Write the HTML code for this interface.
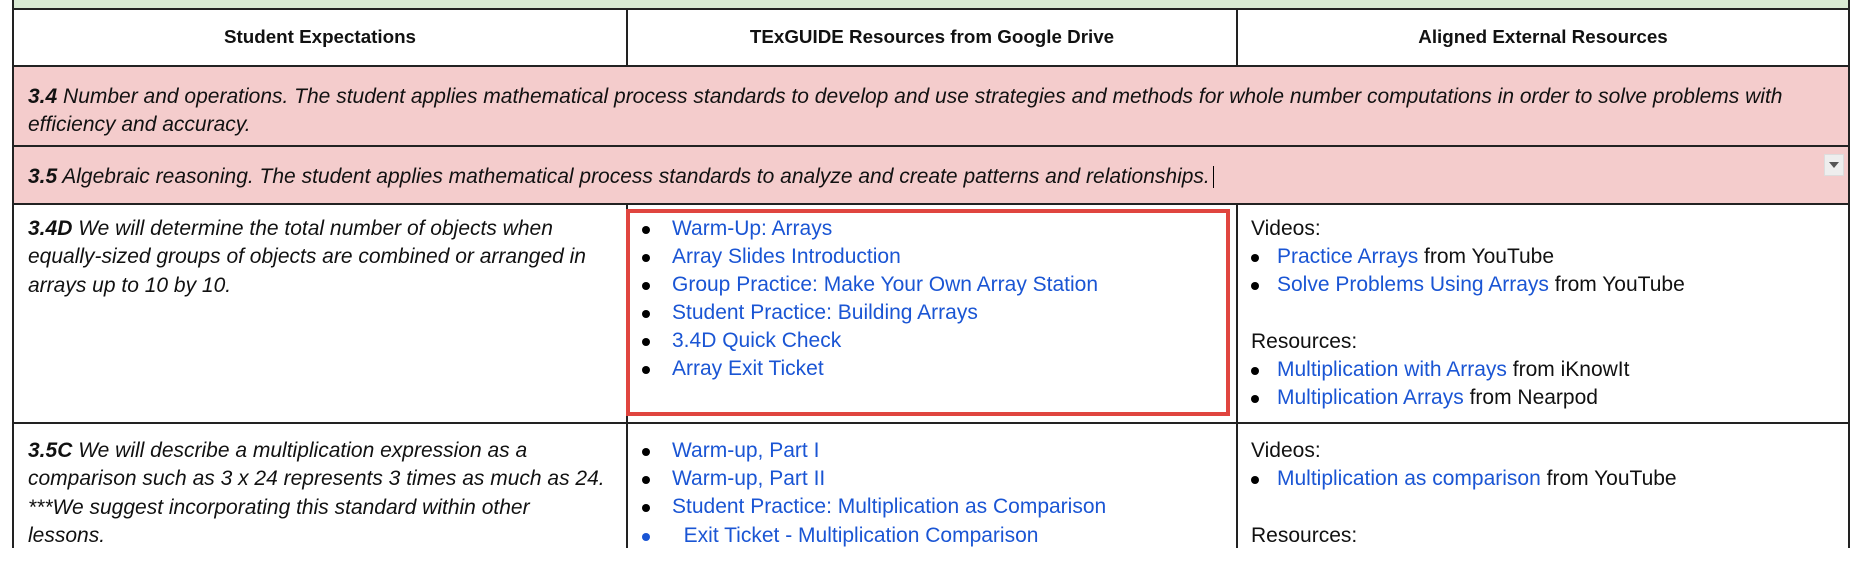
<!DOCTYPE html>
<html><head><meta charset="utf-8"><style>
body{margin:0;width:1863px;height:568px;background:#fff;position:relative;overflow:hidden;font-family:"Liberation Sans",sans-serif;font-size:21px;color:#111;}
.a{position:absolute}
.h{position:absolute;background:#222}
.t{position:absolute;line-height:28.3px;white-space:nowrap}
i{font-style:italic}
.l{color:#1a55d4}
ul{margin:0;padding:0;list-style:none}
li{position:relative;padding-left:34px}
li:before{content:"";position:absolute;left:4px;top:11px;width:8px;height:8px;border-radius:50%;background:#000}
li.b:before{background:#1a55d4}
</style></head><body>
<div class="a" style="left:12px;top:0;width:1837px;height:9px;background:#d9ead3"></div>
<div class="a" style="left:12px;top:66px;width:1837px;height:138px;background:#f4cccc"></div>
<div class="h" style="left:12px;top:8px;width:1838px;height:2px"></div>
<div class="h" style="left:12px;top:65px;width:1838px;height:2px"></div>
<div class="h" style="left:12px;top:145px;width:1838px;height:2px"></div>
<div class="h" style="left:12px;top:203px;width:1838px;height:2px"></div>
<div class="h" style="left:12px;top:422px;width:1838px;height:2px"></div>
<div class="h" style="left:12px;top:0;width:2px;height:548px"></div>
<div class="h" style="left:1848px;top:0;width:2px;height:548px"></div>
<div class="h" style="left:626px;top:9px;width:2px;height:57px"></div>
<div class="h" style="left:1236px;top:9px;width:2px;height:57px"></div>
<div class="h" style="left:626px;top:204px;width:2px;height:344px"></div>
<div class="h" style="left:1236px;top:204px;width:2px;height:344px"></div>
<div class="t" style="left:14px;width:612px;top:23px;text-align:center;font-weight:bold;font-size:18.8px">Student Expectations</div>
<div class="t" style="left:628px;width:608px;top:23px;text-align:center;font-weight:bold;font-size:18.8px">TExGUIDE Resources from Google Drive</div>
<div class="t" style="left:1238px;width:610px;top:23px;text-align:center;font-weight:bold;font-size:18.8px">Aligned External Resources</div>
<div class="t" style="left:28px;top:83px"><i><b>3.4</b> Number and operations. The student applies mathematical process standards to develop and use strategies and methods for whole number computations in order to solve problems with<br>efficiency and accuracy.</i></div>
<div class="t" style="left:28px;top:163px"><i><b>3.5</b> Algebraic reasoning. The student applies mathematical process standards to analyze and create patterns and relationships.</i><span style="display:inline-block;width:1px;height:22px;background:#000;vertical-align:middle;margin-left:3px"></span></div>
<div class="a" style="left:1824px;top:154px;width:18px;height:20px;background:#eee;border:1px solid #ddd"><div style="margin:7px auto 0;width:0;height:0;border-left:5px solid transparent;border-right:5px solid transparent;border-top:6px solid #555"></div></div>
<div class="t" style="left:28px;top:215px"><i><b>3.4D</b> We will determine the total number of objects when<br>equally-sized groups of objects are combined or arranged in<br>arrays up to 10 by 10.</i></div>
<div class="a" style="left:626px;top:209px;width:596px;height:199px;border:4px solid #e0453f"></div>
<ul class="t" style="left:638px;top:215px;line-height:27.9px">
<li class="l">Warm-Up: Arrays</li>
<li class="l">Array Slides Introduction</li>
<li class="l">Group Practice: Make Your Own Array Station</li>
<li class="l">Student Practice: Building Arrays</li>
<li class="l">3.4D Quick Check</li>
<li class="l">Array Exit Ticket</li>
</ul>
<div class="t" style="left:1251px;top:215px;line-height:28.2px">Videos:
<ul><li style="padding-left:30px;margin-left:-4px"><span class="l">Practice Arrays</span> from YouTube</li>
<li style="padding-left:30px;margin-left:-4px"><span class="l">Solve Problems Using Arrays</span> from YouTube</li></ul>
<br>Resources:
<ul><li style="padding-left:30px;margin-left:-4px"><span class="l">Multiplication with Arrays</span> from iKnowIt</li>
<li style="padding-left:30px;margin-left:-4px"><span class="l">Multiplication Arrays</span> from Nearpod</li></ul></div>
<div class="t" style="left:28px;top:437px"><i><b>3.5C</b> We will describe a multiplication expression as a<br>comparison such as 3 x 24 represents 3 times as much as 24.<br>***We suggest incorporating this standard within other<br>lessons.</i></div>
<ul class="t" style="left:638px;top:437px;line-height:28.2px">
<li class="l">Warm-up, Part I</li>
<li class="l">Warm-up, Part II</li>
<li class="l">Student Practice: Multiplication as Comparison</li>
<li class="l b">&nbsp;&nbsp;Exit Ticket - Multiplication Comparison</li>
</ul>
<div class="t" style="left:1251px;top:437px;line-height:28.2px">Videos:
<ul><li style="padding-left:30px;margin-left:-4px"><span class="l">Multiplication as comparison</span> from YouTube</li></ul>
<br>Resources:</div>
<div class="a" style="left:0;top:548px;width:1863px;height:20px;background:#fff"></div>
</body></html>
